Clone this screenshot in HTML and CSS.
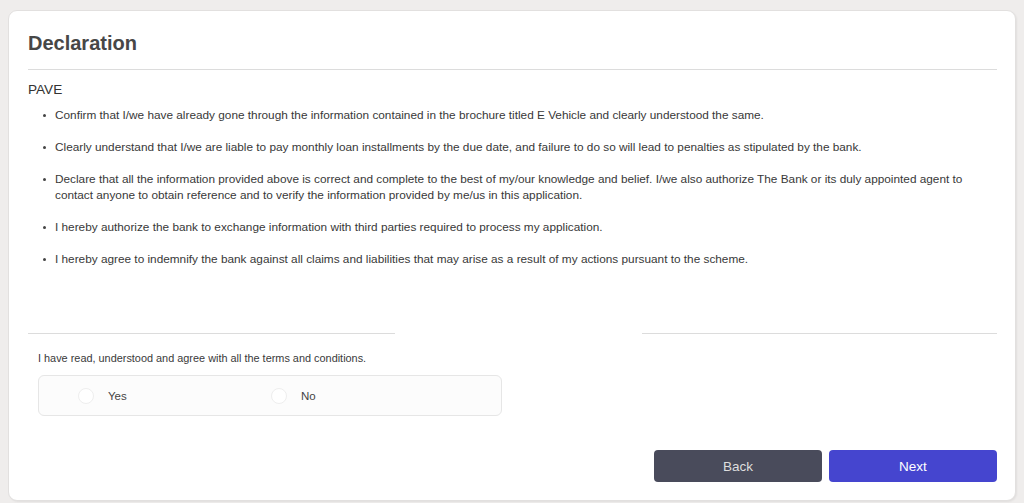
FILE: index.html
```html
<!DOCTYPE html>
<html lang="en">
<head>
<meta charset="utf-8">
<title>Declaration</title>
<link rel="stylesheet" href="styles.css">
</head>
<body>
<div class="card">
  <h1 class="title">Declaration</h1>
  <div class="section-title">PAVE</div>
  <ul class="terms">
    <li>Confirm that I/we have already gone through the information contained in the brochure titled E Vehicle and clearly understood the same.</li>
    <li>Clearly understand that I/we are liable to pay monthly loan installments by the due date, and failure to do so will lead to penalties as stipulated by the bank.</li>
    <li>Declare that all the information provided above is correct and complete to the best of my/our knowledge and belief. I/we also authorize The Bank or its duly appointed agent to contact anyone to obtain reference and to verify the information provided by me/us in this application.</li>
    <li>I hereby authorize the bank to exchange information with third parties required to process my application.</li>
    <li>I hereby agree to indemnify the bank against all claims and liabilities that may arise as a result of my actions pursuant to the scheme.</li>
  </ul>
  <div class="split-divider">
    <span class="seg"></span>
    <span></span>
    <span class="seg"></span>
  </div>
  <div class="agree">
    <div class="agree-label">I have read, understood and agree with all the terms and conditions.</div>
    <div class="radio-box">
      <label class="option"><span class="circle"></span><span>Yes</span></label>
      <label class="option"><span class="circle"></span><span>No</span></label>
    </div>
  </div>
  <div class="actions">
    <button class="btn btn-back">Back</button>
    <button class="btn btn-next">Next</button>
  </div>
</div>
</body>
</html>
```
FILE: styles.css
```css
html, body {
  margin: 0;
  padding: 0;
}
body {
  background: #efedec;
  font-family: "Liberation Sans", Arial, sans-serif;
  color: #3a3a3a;
  padding: 10px 8px 0 8px;
  height: 503px;
  box-sizing: border-box;
  overflow: hidden;
}
.card {
  background: #ffffff;
  border: 1px solid #e2e0df;
  border-radius: 9px;
  padding: 20px 18px 18px 19px;
  box-sizing: border-box;
  height: 491px;
  display: flex;
  flex-direction: column;
  box-shadow: 1px 1px 2px rgba(0, 0, 0, 0.06);
}
.title {
  margin: 0;
  font-size: 20px;
  line-height: 24px;
  font-weight: 700;
  color: #474747;
  padding-bottom: 14px;
  border-bottom: 1px solid #dcdcdc;
}
.section-title {
  margin-top: 12px;
  font-size: 13.6px;
  line-height: 16px;
  color: #333;
}
.terms {
  list-style: none;
  margin: 9px 0 0 0;
  padding: 0;
}
.terms li {
  position: relative;
  padding-left: 27px;
  font-size: 11.8px;
  line-height: 16px;
  color: #383838;
  margin-bottom: 16px;
}
.terms li::before {
  content: "";
  position: absolute;
  left: 15px;
  top: 7px;
  width: 3px;
  height: 3px;
  border-radius: 50%;
  background: #444;
}
.split-divider {
  margin-top: 50px;
  display: grid;
  grid-template-columns: 367px 1fr 355px;
}
.split-divider .seg {
  border-top: 1px solid #dcdcdc;
}
.agree {
  padding-left: 10px;
  margin-top: 18px;
}
.agree-label {
  font-size: 10.9px;
  line-height: 13px;
  color: #3a3a3a;
}
.radio-box {
  margin-top: 10px;
  width: 464px;
  height: 41px;
  box-sizing: border-box;
  border: 1px solid #e6e6e6;
  border-radius: 6px;
  background: #fcfcfc;
  display: grid;
  grid-template-columns: 193px 1fr;
  align-items: center;
  padding-left: 39px;
}
.option {
  display: flex;
  align-items: center;
  font-size: 11.5px;
  color: #444;
}
.circle {
  width: 16px;
  height: 16px;
  border-radius: 50%;
  border: 1px solid #eeeeee;
  background: #fff;
  box-sizing: border-box;
  margin-right: 14px;
}
.actions {
  margin-top: auto;
  display: flex;
  justify-content: flex-end;
  gap: 7px;
}
.btn {
  width: 168px;
  height: 32px;
  border: none;
  border-radius: 4px;
  font-family: "Liberation Sans", Arial, sans-serif;
  font-size: 13.5px;
  cursor: pointer;
}
.btn-back {
  background: #494b5b;
  color: #dedede;
}
.btn-next {
  background: #4545cf;
  color: #ffffff;
}
```
